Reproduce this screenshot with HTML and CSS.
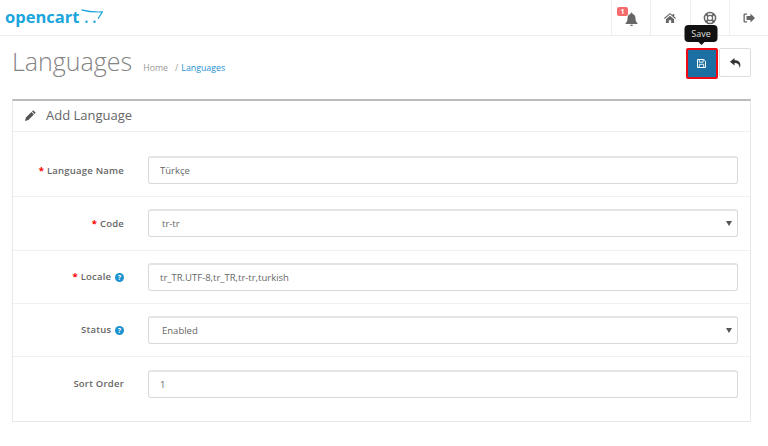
FILE: index.html
```html
<!DOCTYPE html>
<html lang="en">
<head>
<meta charset="utf-8">
<title>Languages</title>
<link rel="stylesheet" href="styles.css">
</head>
<body>
<header class="topbar">
  <a class="logo">
    <span class="logo-text">opencart</span>
    <svg class="logo-cart" width="22" height="15" viewBox="0 0 22 15"><path d="M0.5 .8C6 2.400 14 3.200 21.300 2.900L17 9.800" fill="none" stroke="#1aa5dd" stroke-width="1.200"/><circle cx="5.500" cy="12.800" r="1.200" fill="#1aa5dd"/><circle cx="13.500" cy="12.800" r="1.200" fill="#1aa5dd"/></svg>
  </a>
  <nav class="topnav">
    <a class="navcell navcell-bell">
      <span class="badge">1</span>
      <svg width="13" height="14" viewBox="0 0 13 14"><path d="M6.500 0.500a1 1 0 0 1 1 1v.6c2 .5 3 2.200 3 4.400 0 2.600 1 3.700 2 4.700v.8H.500v-.8c1-1 2-2.100 2-4.700 0-2.200 1-3.900 3-4.400v-.6a1 1 0 0 1 1-1zM5 12.800h3a1.500 1.200 0 0 1-3 0z" fill="#666"/></svg>
    </a>
    <a class="navcell">
      <svg width="12" height="10" viewBox="0 0 13 11"><path d="M6.500 0L9.500 2.600V1h1.700v3L13 5.600l-.8.900-5.700-5-5.700 5L0 5.600zM2 7L6.500 3 11 7v4H7.800V8H5.200v3H2z" fill="#666"/></svg>
    </a>
    <a class="navcell">
      <svg width="14" height="14" viewBox="0 0 14 14"><circle cx="7" cy="7" r="5.600" fill="none" stroke="#666" stroke-width="1.500"/><circle cx="7" cy="7" r="2.600" fill="none" stroke="#666" stroke-width="1.200"/><path d="M3 3l2.200 2.200M11 3L8.800 5.200M3 11l2.200-2.200M11 11L8.800 8.800" stroke="#666" stroke-width="2"/></svg>
    </a>
    <a class="navcell">
      <svg width="12" height="10" viewBox="0 0 12 10"><path d="M4 .5H1.500A1 1 0 0 0 .5 1.500v7a1 1 0 0 0 1 1H4V8.300H1.800V1.700H4z" fill="#666"/><path d="M7.500 0.500L12 5 7.500 9.500V7H3.500V3H7.500z" fill="#666"/></svg>
    </a>
  </nav>
</header>

<section class="pagehead">
  <div class="title-wrap">
    <h1 class="title">Languages</h1>
    <ul class="crumbs">
      <li class="crumb">Home</li>
      <li class="crumb-sep">/</li>
      <li class="crumb crumb-active">Languages</li>
    </ul>
  </div>
  <div class="actions">
    <button class="btn btn-save" type="button" aria-label="Save">
      <svg class="save-icon" width="9" height="9" viewBox="0 0 9 9"><path d="M.5.5h6.300L8.500 2.200v6.300H.5z" fill="none" stroke="#fff" stroke-width="1"/><path d="M2.300 1v2.200h3.800V1M2.300 8V5.300h4.400V8" fill="none" stroke="#fff" stroke-width=".9"/></svg>
      <span class="tooltip">Save</span>
    </button>
    <button class="btn btn-back" type="button" aria-label="Back">
      <svg width="11" height="10" viewBox="0 0 11 10"><path d="M4.500 0L0 3.700l4.500 3.700V5C7.500 5 9.200 5.800 9.700 10 11.500 5.500 9.500 2.400 4.500 2.300z" fill="#333"/></svg>
    </button>
  </div>
</section>

<section class="panel">
  <div class="panel-head">
    <svg width="11" height="11" viewBox="0 0 12 12"><path d="M9 .3l2.700 2.700-1.300 1.300L7.700 1.600zM7 2.300L9.700 5l-6 6L0 12l1-3.700z" fill="#555"/></svg>
    <h3 class="panel-title">Add Language</h3>
  </div>
  <form class="form">
    <div class="row">
      <label class="label"><span class="req">*</span> Language Name</label>
      <div class="field">Türkçe</div>
    </div>
    <div class="row">
      <label class="label"><span class="req">*</span> Code</label>
      <div class="field field-select">tr-tr<span class="caret"></span></div>
    </div>
    <div class="row">
      <label class="label"><span class="req">*</span> Locale <span class="help">?</span></label>
      <div class="field">tr_TR.UTF-8,tr_TR,tr-tr,turkish</div>
    </div>
    <div class="row">
      <label class="label">Status <span class="help">?</span></label>
      <div class="field field-select">Enabled<span class="caret"></span></div>
    </div>
    <div class="row row-last">
      <label class="label">Sort Order</label>
      <div class="field">1</div>
    </div>
  </form>
</section>
</body>
</html>
```
FILE: styles.css
```css
* { box-sizing: border-box; }
html, body { margin: 0; height: 446px; overflow: hidden; background: #fff; }
body { font-family: "Open Sans", sans-serif; font-size: 10px; color: #666; }

.topbar { height: 36px; display: flex; justify-content: space-between; border-bottom: 1px solid #eee; }
.logo { display: flex; align-items: flex-start; padding: 7px 0 0 5px; }
.logo-text { font-family: "Open Sans", sans-serif; font-weight: 700; font-size: 16.500px; line-height: 20px; color: #1aa5dd; }
.logo-cart { margin: 2px 0 0 2px; }
.topnav { display: flex; }
.navcell { position: relative; width: 39.250px; height: 35px; display: flex; align-items: center; justify-content: center; border-left: 1px solid #eee; }
.navcell-bell svg { margin-top: 2px; }
.badge { position: absolute; left: 5px; top: 7px; width: 11px; height: 9px; border-radius: 2px; background: #f56b6b; color: #fff; font-size: 7px; font-weight: 700; line-height: 9px; text-align: center; }

.pagehead { height: 63px; padding: 0 17px 0 12px; display: flex; justify-content: space-between; }
.title-wrap { display: flex; align-items: baseline; padding-top: 7px; }
.title { margin: 0; font-weight: 300; font-size: 25px; line-height: 36px; color: #848484; }
.crumbs { list-style: none; display: flex; margin: 0 0 0 11px; padding: 0; font-size: 8.800px; color: #999; }
.crumb-sep { margin: 0 3px 0 7px; }
.crumb-active { color: #1e91cf; }

.actions { display: flex; align-items: flex-start; gap: 1px; padding-top: 12px; }
.btn { position: relative; width: 32px; height: 29px; padding: 0; display: flex; align-items: center; justify-content: center; border-radius: 2px; }
.btn-save { height: 31px; background: #1b6fa3; border: 2px solid #f00a14; }
.save-icon { margin-right: 2px; }
.btn-back { background: #fff; border: 1px solid #ddd; }
.tooltip { position: absolute; left: calc(50% - 1px); bottom: 35px; transform: translateX(-50%); width: 33px; height: 17px; border-radius: 4px; background: #111; color: #ddd; font-family: "Open Sans", sans-serif; font-size: 9px; line-height: 17px; text-align: center; }
.tooltip::after { content: ""; position: absolute; left: 50%; top: 100%; margin-left: -3px; border: 3px solid transparent; border-bottom: 0; border-top-color: #111; }

.panel { margin: 0 17px 0 12px; height: 323px; border: 1px solid #e8e8e8; border-top: 2px solid #bbb; }
.panel-head { height: 31px; display: flex; align-items: center; gap: 10px; padding: 0 0 2px 12px; border-bottom: 1px solid #eee; }
.panel-title { margin: 0; font-weight: 400; font-size: 13px; color: #666; }
.form { padding-top: 12px; }
.row { height: 53.250px; display: flex; align-items: center; gap: 24px; padding: 0 12px 0 0; border-bottom: 1px solid #f0f0f0; }
.row-last { border-bottom: 0; }
.label { width: 111px; text-align: right; font-weight: 600; font-size: 9.500px; letter-spacing: .22px; color: #666; display: block; }
.req { color: #f00; font-weight: 700; }
.help { display: inline-block; width: 9px; height: 9px; margin-left: 1px; border-radius: 50%; background: #1e91cf; color: #fff; font-size: 7px; font-weight: 700; line-height: 9px; letter-spacing: 0; text-align: center; vertical-align: 0; }
.field { position: relative; flex: 1; height: 28px; padding-left: 11px; border: 1px solid #d9d9d9; border-top-width: 2px; border-top-color: #e4e4e4; border-radius: 3px; font-size: 9.500px; line-height: 25px; color: #666; background: #fff; }
.field-select { padding-left: 13px; }
.caret { position: absolute; right: 5px; top: 10px; border: 3px solid transparent; border-bottom: 0; border-top: 5px solid #555; }
```
